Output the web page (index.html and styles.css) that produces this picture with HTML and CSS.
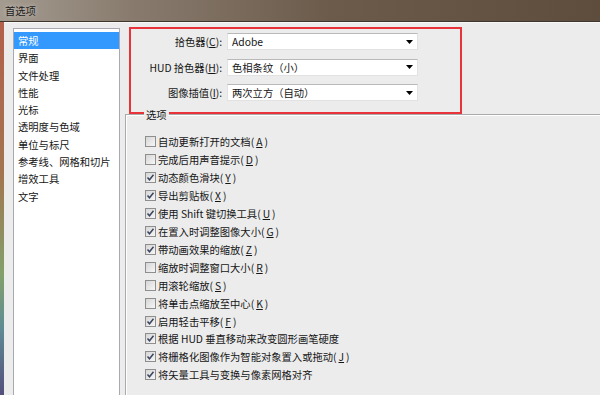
FILE: index.html
```html
<!DOCTYPE html>
<html lang="zh-CN">
<head>
<meta charset="utf-8">
<title>首选项</title>
<link rel="stylesheet" href="styles.css">
</head>
<body>
<div class="titlebar"><span class="title">首选项</span></div>
<div class="window">
  <div class="frame"></div>
  <div class="dialog">
    <ul class="nav">
      <li class="sel">常规</li>
      <li>界面</li>
      <li>文件处理</li>
      <li>性能</li>
      <li>光标</li>
      <li>透明度与色域</li>
      <li>单位与标尺</li>
      <li>参考线、网格和切片</li>
      <li>增效工具</li>
      <li>文字</li>
    </ul>
    <div class="content">
      <div class="highlight">
        <div class="field">
          <label>拾色器(<u>C</u>):</label>
          <div class="select"><span>Adobe</span><svg class="arrow" width="7" height="4" viewBox="0 0 7 4"><polygon points="0,0 7,0 3.5,4" fill="#000"/></svg></div>
        </div>
        <div class="field">
          <label>HUD 拾色器(<u>H</u>):</label>
          <div class="select"><span>色相条纹（小）</span><svg class="arrow" width="7" height="4" viewBox="0 0 7 4"><polygon points="0,0 7,0 3.5,4" fill="#000"/></svg></div>
        </div>
        <div class="field">
          <label>图像插值(<u>I</u>):</label>
          <div class="select"><span>两次立方（自动）</span><svg class="arrow" width="7" height="4" viewBox="0 0 7 4"><polygon points="0,0 7,0 3.5,4" fill="#000"/></svg></div>
        </div>
      </div>
      <div class="group">
        <div class="group-title">选项</div>
        <div class="options">
          <div class="opt"><span class="cb"></span>自动更新打开的文档(<u>A</u>)</div>
          <div class="opt"><span class="cb"></span>完成后用声音提示(<u>D</u>)</div>
          <div class="opt"><span class="cb on"><svg width="9" height="9" viewBox="0 0 9 9"><polyline points="1.5,4.5 3.5,6.8 7.5,1.8" fill="none" stroke="#3a4560" stroke-width="1.5"/></svg></span>动态颜色滑块(<u>Y</u>)</div>
          <div class="opt"><span class="cb on"><svg width="9" height="9" viewBox="0 0 9 9"><polyline points="1.5,4.5 3.5,6.8 7.5,1.8" fill="none" stroke="#3a4560" stroke-width="1.5"/></svg></span>导出剪贴板(<u>X</u>)</div>
          <div class="opt"><span class="cb on"><svg width="9" height="9" viewBox="0 0 9 9"><polyline points="1.5,4.5 3.5,6.8 7.5,1.8" fill="none" stroke="#3a4560" stroke-width="1.5"/></svg></span>使用 Shift 键切换工具(<u>U</u>)</div>
          <div class="opt"><span class="cb on"><svg width="9" height="9" viewBox="0 0 9 9"><polyline points="1.5,4.5 3.5,6.8 7.5,1.8" fill="none" stroke="#3a4560" stroke-width="1.5"/></svg></span>在置入时调整图像大小(<u>G</u>)</div>
          <div class="opt"><span class="cb on"><svg width="9" height="9" viewBox="0 0 9 9"><polyline points="1.5,4.5 3.5,6.8 7.5,1.8" fill="none" stroke="#3a4560" stroke-width="1.5"/></svg></span>带动画效果的缩放(<u>Z</u>)</div>
          <div class="opt"><span class="cb"></span>缩放时调整窗口大小(<u>R</u>)</div>
          <div class="opt"><span class="cb"></span>用滚轮缩放(<u>S</u>)</div>
          <div class="opt"><span class="cb"></span>将单击点缩放至中心(<u>K</u>)</div>
          <div class="opt"><span class="cb on"><svg width="9" height="9" viewBox="0 0 9 9"><polyline points="1.5,4.5 3.5,6.8 7.5,1.8" fill="none" stroke="#3a4560" stroke-width="1.5"/></svg></span>启用轻击平移(<u>F</u>)</div>
          <div class="opt"><span class="cb on"><svg width="9" height="9" viewBox="0 0 9 9"><polyline points="1.5,4.5 3.5,6.8 7.5,1.8" fill="none" stroke="#3a4560" stroke-width="1.5"/></svg></span>根据 HUD 垂直移动来改变圆形画笔硬度</div>
          <div class="opt"><span class="cb on"><svg width="9" height="9" viewBox="0 0 9 9"><polyline points="1.5,4.5 3.5,6.8 7.5,1.8" fill="none" stroke="#3a4560" stroke-width="1.5"/></svg></span>将栅格化图像作为智能对象置入或拖动(<u>J</u>)</div>
          <div class="opt"><span class="cb on"><svg width="9" height="9" viewBox="0 0 9 9"><polyline points="1.5,4.5 3.5,6.8 7.5,1.8" fill="none" stroke="#3a4560" stroke-width="1.5"/></svg></span>将矢量工具与变换与像素网格对齐</div>
        </div>
      </div>
    </div>
  </div>
</div>
</body>
</html>
```

FILE: styles.css
```css
html, body {
  margin: 0;
  padding: 0;
}

body {
  width: 600px;
  height: 395px;
  overflow: hidden;
  font-family: "Noto Sans CJK SC", "Noto Sans", sans-serif;
  font-size: 10.3px;
  color: #151515;
  background: #ececec;
}

.titlebar {
  height: 21px;
  border-bottom: 1px solid #3e352d;
  background: linear-gradient(to right, #a49b90 0%, #887b6e 22%, #6c5b4b 55%, #5e4c3c 100%);
  display: flex;
  align-items: center;
  padding-left: 5px;
}

.title {
  color: #1c1c1c;
  text-shadow: 0 0 5px rgba(255, 255, 255, 0.55);
}

.window {
  display: flex;
  height: 373px;
}

.frame {
  width: 4px;
  background: linear-gradient(#b3604c 0%, #a3744f 40%, #82a06c 68%, #5f8c94 82%, #544f7c 100%);
}

.dialog {
  flex: 1;
  display: flex;
  align-items: flex-start;
  gap: 5px;
  padding: 4px 0 0 9px;
  background: #ececec;
  border-top: 1px solid #f8f8f8;
  overflow: hidden;
}

.nav {
  width: 105px;
  height: 400px;
  margin: 1px 0 0;
  padding: 3px 0 0;
  list-style: none;
  background: #fff;
  border: 1px solid #a9a9b3;
  flex: none;
}

.nav li {
  height: 17.3px;
  line-height: 17.3px;
  padding-left: 4px;
  white-space: nowrap;
}

.nav li.sel {
  background: #3399ff;
  color: #fff;
}

.content {
  flex: 1;
  display: flex;
  flex-direction: column;
  height: 400px;
}

.highlight {
  margin-left: 4px;
  width: 333px;
  height: 87px;
  box-sizing: border-box;
  border: 2px solid #e8333b;
  padding-top: 4px;
  display: flex;
  flex-direction: column;
  gap: 8.5px;
}

.field {
  display: flex;
  align-items: center;
  height: 17px;
}

.field label {
  width: 91px;
  margin-right: 5px;
  text-align: right;
  white-space: nowrap;
}

.select {
  width: 191px;
  height: 17px;
  box-sizing: border-box;
  background: #fff;
  border: 1px solid #e2e2e2;
  border-top-color: #b9b9b9;
  display: flex;
  align-items: center;
  justify-content: space-between;
  padding: 0 4px;
}

.arrow {
  display: block;
}

.group {
  flex: 1;
  display: flex;
  flex-direction: column;
  border-top: 1px solid #aaaaaa;
  border-left: 1px solid #aaaaaa;
  box-shadow: inset 1px 1px 0 #ffffff;
}

.group-title {
  align-self: flex-start;
  margin: -7px 0 0 18px;
  padding: 0 2px;
  line-height: 13px;
  background: #ececec;
}

.options {
  padding: 12px 0 0 19px;
}

.opt {
  height: 17.92px;
  display: flex;
  align-items: center;
  gap: 2px;
  white-space: nowrap;
}

.cb {
  width: 11px;
  height: 11px;
  box-sizing: border-box;
  border: 1px solid #8e8e8e;
  background: linear-gradient(135deg, #d6d6d6, #f6f6f6);
  display: flex;
  align-items: center;
  justify-content: center;
  flex: none;
}

.cb svg {
  display: block;
}

u {
  text-decoration: underline;
  text-underline-offset: 1px;
}
```
